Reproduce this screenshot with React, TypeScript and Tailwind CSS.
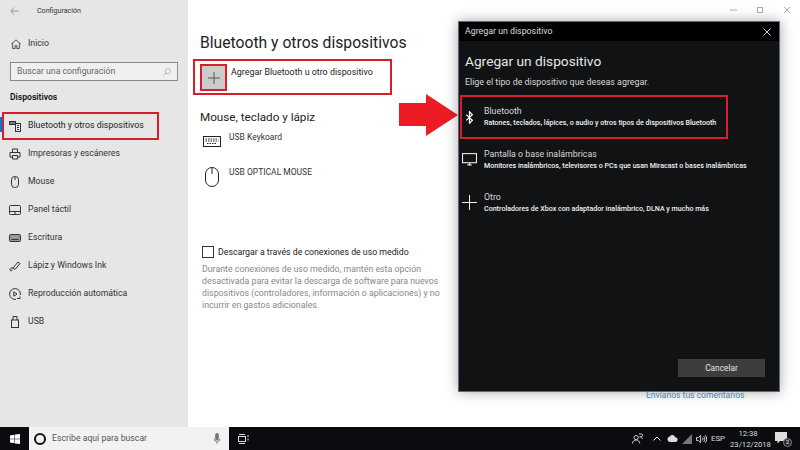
import type { ReactNode } from 'react';

const NAV_ICON = 'h-[12px] w-[12px] fill-none stroke-[#333] stroke-1';

const navItems: { label: string; icon: ReactNode }[] = [
    {
        label: 'Impresoras y escáneres',
        icon: <svg viewBox="0 0 12 12" className={NAV_ICON}><path d="M3.5 4V1h5v3M1 9V4.5h10V9H9M3 9H1M3.5 7.5h5V11h-5z" /></svg>,
    },
    {
        label: 'Mouse',
        icon: <svg viewBox="0 0 12 12" className={NAV_ICON}><rect x="2.5" y="0.5" width="7" height="11" rx="3.2" /><path d="M6 1v3" /></svg>,
    },
    {
        label: 'Panel táctil',
        icon: <svg viewBox="0 0 12 12" className={NAV_ICON}><rect x="0.5" y="1.5" width="11" height="9" rx="1" /><path d="M0.5 7.5h11M6 7.5v3" /></svg>,
    },
    {
        label: 'Escritura',
        icon: <svg viewBox="0 0 12 12" className={NAV_ICON}><rect x="0.5" y="2.5" width="11" height="7" rx="1" fill="#999" /><path d="M2.5 7.5h7" /></svg>,
    },
    {
        label: 'Lápiz y Windows Ink',
        icon: <svg viewBox="0 0 12 12" className={NAV_ICON}><path d="M4 8l5-6 2 1.5-5 6zM4 8c-2-.5-3.5.5-3 2s2.5 1 2-.5" /></svg>,
    },
    {
        label: 'Reproducción automática',
        icon: <svg viewBox="0 0 12 12" className={NAV_ICON}><path d="M7 11.3A5.4 5.4 0 1 1 11.3 7" /><path d="M4.8 3.8l3.2 2.2-3.2 2.2z" /><path d="M8 10.5h3v-2" /></svg>,
    },
    {
        label: 'USB',
        icon: <svg viewBox="0 0 12 12" className={NAV_ICON}><rect x="2.5" y="4" width="7" height="7.5" /><path d="M4 4V0.5h4V4" /></svg>,
    },
];

function NavRow({ icon, label }: { icon: ReactNode; label: string }) {
    return (
        <div className="flex h-[28px] items-center gap-[7px] pl-[9px] text-[8.7px] text-[#333]">
            {icon}
            <span>{label}</span>
        </div>
    );
}

function DialogOption({ icon, title, text }: { icon: ReactNode; title: string; text: string }) {
    return (
        <div className="flex h-[43px] items-center">
            <div className="flex w-[25px] shrink-0 justify-start pl-[3px]">{icon}</div>
            <div>
                <div className="text-[8.8px] leading-[11px] text-[#d8d8d8]">{title}</div>
                <div className="text-[7.1px] leading-[11px] font-medium whitespace-nowrap text-[#f2f2f2]">{text}</div>
            </div>
        </div>
    );
}

function Dialog() {
    return (
        <div className="absolute top-[21px] left-[458px] flex h-[371px] w-[322px] flex-col border border-[#5b6b7d] bg-[#111214] shadow-[0_0_12px_rgba(0,0,0,0.35)]">
            <div className="flex h-[19px] shrink-0 items-center justify-between bg-black pr-[8px] pl-[6px] text-[8.8px] text-[#ddd]">
                <span>Agregar un dispositivo</span>
                <svg viewBox="0 0 8 8" className="h-[8px] w-[8px] fill-none stroke-[#ccc] stroke-1"><path d="M0.5 0.5l7 7M7.5 0.5l-7 7" /></svg>
            </div>
            <div className="flex flex-1 flex-col px-[6px]">
                <h2 className="mt-[10px] text-[13.7px] leading-[20px] text-[#e8e8e8]">Agregar un dispositivo</h2>
                <p className="mt-[4px] text-[8.9px] leading-[14px] text-[#d8d8d8]">Elige el tipo de dispositivo que deseas agregar.</p>
                <div className="mt-[6px] -ml-[5px] flex h-[44px] w-[268px] items-center border-[2.5px] border-[#d81e2c]">
                    <div className="flex w-[22px] shrink-0 justify-start pl-[3px]">
                        <svg viewBox="0 0 10 16" className="h-[13px] w-[9px] fill-none stroke-white stroke-[1.5]"><path d="M1 4.5l7.5 7-3.5 3.5V1l3.5 3.5L1 11.5" /></svg>
                    </div>
                    <div>
                        <div className="text-[8.8px] leading-[11px] text-[#d8d8d8]">Bluetooth</div>
                        <div className="text-[7.1px] leading-[11px] font-medium whitespace-nowrap text-[#f2f2f2]">Ratones, teclados, lápices, o audio y otros tipos de dispositivos Bluetooth</div>
                    </div>
                </div>
                <div className="-mt-[1px] -ml-[6px] flex flex-col">
                    <DialogOption
                        icon={<svg viewBox="0 0 14 12" className="h-[13px] w-[15px] fill-none stroke-[#eee] stroke-1"><rect x="0.5" y="0.5" width="13" height="8.5" /><path d="M5 11h4M7 9v2" /></svg>}
                        title="Pantalla o base inalámbricas"
                        text="Monitores inalámbricos, televisores o PCs que usan Miracast o bases inalámbricas"
                    />
                    <DialogOption
                        icon={<svg viewBox="0 0 15 15" className="h-[15px] w-[15px] fill-none stroke-[#eee] stroke-1"><path d="M0 7.5h15M7.5 0v15" /></svg>}
                        title="Otro"
                        text="Controladores de Xbox con adaptador inalámbrico, DLNA y mucho más"
                    />
                </div>
                <div className="mt-auto mb-[14px] flex justify-end pr-[8px]">
                    <div className="flex h-[18px] w-[87px] items-center justify-center bg-[#3d3d3d] text-[8.3px] text-[#e4e4e4]">Cancelar</div>
                </div>
            </div>
        </div>
    );
}

function Taskbar() {
    return (
        <div className="flex h-[23px] items-center bg-[#0a0c10] text-[#ddd]">
            <div className="flex w-[29px] justify-center">
                <svg viewBox="0 0 10 10" className="h-[10px] w-[10px] fill-white"><path d="M0 1.4L4.5 0.7V4.8H0zM5 0.6L10 0V4.8H5zM0 5.2H4.5V9.3L0 8.6zM5 5.2H10V10L5 9.4z" /></svg>
            </div>
            <div className="flex h-full w-[200px] items-center bg-[#f2f2f2] pl-[5px] text-[8.7px] text-[#555]">
                <div className="h-[12px] w-[12px] rounded-full border-2 border-[#111]" />
                <span className="ml-[6px] flex-1">Escribe aquí para buscar</span>
                <svg viewBox="0 0 8 12" className="mr-[8px] h-[11px] w-[8px] fill-[#777]"><rect x="2" y="0" width="4" height="8" rx="2" /><path d="M0.5 6a3.5 3.5 0 0 0 7 0h-0.8a2.7 2.7 0 0 1-5.4 0zM3.5 9.5h1V12h-1z" /></svg>
            </div>
            <div className="ml-[9px] flex">
                <svg viewBox="0 0 11 10" className="h-[10px] w-[11px] fill-none stroke-[#ddd]"><rect x="0.5" y="2.5" width="7" height="5" /><path d="M1 0.5h6M1 9.5h6M10 1v2M10 4.5v2" /></svg>
            </div>
            <div className="ml-auto flex items-center">
                <svg viewBox="0 0 12 12" className="h-[11px] w-[11px] fill-none stroke-[#ddd]"><circle cx="4.5" cy="5" r="2.3" /><path d="M0.5 11.5c0-2.5 2-3.8 4-3.8s4 1.3 4 3.8M7.5 1h2.5a1.3 1.3 0 0 1 0 3.2H8M9.5 4.2l2 2.3" /></svg>
                <svg viewBox="0 0 8 5" className="ml-[10px] h-[5px] w-[8px] fill-none stroke-[#ddd]"><path d="M0.5 4.5l3.5-3.5 3.5 3.5" /></svg>
                <svg viewBox="0 0 12 8" className="ml-[6px] h-[7px] w-[11px] fill-[#ddd]"><path d="M3 8a3 3 0 0 1-.5-5.9A3.5 3.5 0 0 1 9 2.6 2.7 2.7 0 0 1 9.3 8z" /></svg>
                <svg viewBox="0 0 10 10" className="ml-[4px] h-[10px] w-[10px] fill-[#777]"><path d="M0 10L10 0v10z" /></svg>
                <svg viewBox="0 0 12 10" className="ml-[4px] h-[10px] w-[11px] fill-none stroke-[#ddd]"><path d="M0.5 3.5h2l2.5-2.5v8l-2.5-2.5h-2zM7 3.5a2 2 0 0 1 0 3M8.5 2a4.5 4.5 0 0 1 0 6M10 0.8a6 6 0 0 1 0 8.4" /></svg>
                <span className="ml-[4px] text-[7.8px]">ESP</span>
                <div className="ml-[5px] w-[36px] text-center text-[7.7px] leading-[11px]">
                    <div>12:38</div>
                    <div>23/12/2018</div>
                </div>
                <div className="relative mr-[11px] ml-[9px] h-[14px] w-[14px]">
                    <svg viewBox="0 0 12 12" className="h-[12px] w-[12px] fill-[#ddd]"><path d="M0 0h12v9H5L2.5 11.5V9H0z" /></svg>
                    <span className="absolute right-[-3px] bottom-[-1px] flex h-[9px] w-[9px] items-center justify-center rounded-full border border-[#888] bg-[#222] text-[6px] leading-none text-white">2</span>
                </div>
            </div>
        </div>
    );
}

export default function App() {
    return (
        <div className="relative flex h-[450px] w-[800px] flex-col overflow-hidden bg-white font-['Roboto','Open_Sans',sans-serif]">
            <div className="flex min-h-0 flex-1">
                <aside className="w-[188px] shrink-0 bg-[#e6e6e6]">
                    <div className="flex h-[22px] items-center pl-[10px] text-[7.1px] text-[#333]">
                        <svg viewBox="0 0 9 8" className="h-[8px] w-[9px] fill-none stroke-[#999]"><path d="M9 4H1M4 0.5L0.8 4 4 7.5" /></svg>
                        <span className="ml-[18px]">Configuración</span>
                    </div>
                    <div className="mt-[8px] flex h-[28px] items-center gap-[7px] pl-[11px] text-[8.7px] text-[#333]">
                        <svg viewBox="0 0 12 12" className="h-[10px] w-[10px] fill-none stroke-[#333]"><path d="M0.5 6L6 1l5.5 5M2 5v6.5h3V8h2v3.500h3V5" /></svg>
                        <span>Inicio</span>
                    </div>
                    <div className="mx-[10px] mt-[4px] flex h-[19px] items-center justify-between border border-[#8a8a8a] bg-[#f0f0f0] px-[6px] text-[8.7px] text-[#666]">
                        <span>Buscar una configuración</span>
                        <svg viewBox="0 0 10 10" className="h-[8px] w-[8px] fill-none stroke-[#aaa]"><circle cx="6" cy="4" r="3.3" /><path d="M3.7 6.3L0.5 9.5" /></svg>
                    </div>
                    <div className="mt-[9px] pl-[10px] text-[8.6px] leading-[14px] font-semibold text-[#111]">Dispositivos</div>
                    <div className="relative mt-[8px] flex h-[28px] items-center gap-[7px] pl-[9px] text-[8.8px] text-[#222]">
                        <svg viewBox="0 0 12 12" className="h-[12px] w-[12px] fill-none stroke-[#333]"><rect x="0.5" y="1.5" width="6" height="3" fill="#777" /><rect x="6.5" y="3.5" width="5" height="8" /><path d="M8 5.5h2M8 7.5h2M8 9.5h2" /></svg>
                        <span>Bluetooth y otros dispositivos</span>
                        <span className="absolute top-[5px] left-0 h-[15px] w-[2px] bg-[#0078d7]" />
                        <span className="absolute top-0 left-[2px] h-[28px] w-[157px] border-[2.5px] border-[#d81e2c]" />
                    </div>
                    {navItems.map((item) => (
                        <NavRow key={item.label} icon={item.icon} label={item.label} />
                    ))}
                </aside>
                <main className="flex-1 pl-[12px]">
                    <h1 className="mt-[32px] text-[15.7px] leading-[22px] text-[#222]">Bluetooth y otros dispositivos</h1>
                    <div className="mt-[5px] -ml-[7px] flex h-[36px] w-[199px] items-start border-[2.5px] border-[#d81e2c] pt-[3px] pl-[5px]">
                        <div className="flex h-[27px] w-[27px] items-center justify-center border-[2.5px] border-[#d81e2c] bg-[#cccccc]">
                            <svg viewBox="0 0 12 12" className="h-[12px] w-[12px] fill-none stroke-[#555]"><path d="M0 6h12M6 0v12" /></svg>
                        </div>
                        <span className="mt-[1px] ml-[4px] text-[8.9px] leading-[14px] text-[#222]">Agregar Bluetooth u otro dispositivo</span>
                    </div>
                    <h3 className="mt-[13px] text-[11.7px] leading-[18px] text-[#222]">Mouse, teclado y lápiz</h3>
                    <div className="mt-[4px] flex h-[35px] items-start">
                        <div className="flex w-[29px] justify-start pl-[3px] pt-[6px]">
                            <svg viewBox="0 0 18 11" className="h-[11px] w-[18px] fill-none stroke-[#222]"><rect x="0.5" y="0.5" width="17" height="10" /><path d="M2.5 3h13M2.5 5h13M4 7.5h10" strokeDasharray="1.5 1" /></svg>
                        </div>
                        <span className="text-[8.5px] leading-[14px] text-[#333]">USB Keykoard</span>
                    </div>
                    <div className="flex h-[35px] items-start">
                        <div className="flex w-[29px] justify-start pl-[5px] pt-[2px]">
                            <svg viewBox="0 0 14 20" className="h-[20px] w-[14px] fill-none stroke-[#222]"><rect x="0.5" y="0.5" width="13" height="19" rx="6.5" /><path d="M7 1v6" /></svg>
                        </div>
                        <span className="text-[8.5px] leading-[14px] text-[#333]">USB OPTICAL MOUSE</span>
                    </div>
                    <div className="mt-[45px] ml-[2px] flex items-center">
                        <div className="h-[12px] w-[12px] border border-[#333]" />
                        <span className="ml-[4px] text-[8.75px] leading-[14px] text-[#222]">Descargar a través de conexiones de uso medido</span>
                    </div>
                    <p className="mt-[4px] ml-[2px] w-[240px] text-[8.8px] leading-[12px] text-[#888]">
                        Durante conexiones de uso medido, mantén esta opción desactivada para evitar la descarga de software para nuevos dispositivos (controladores, información o aplicaciones) y no incurrir en gastos adicionales.
                    </p>
                </main>
            </div>
            <Taskbar />
            <svg viewBox="0 0 60 42" className="absolute top-[94px] left-[399px] h-[42px] w-[60px] fill-[#ed1c24]"><path d="M0 9h27V0l32 21-32 21V32H0z" /></svg>
            <Dialog />
            <span className="absolute top-[389px] left-[646px] text-[8.55px] leading-[13px] text-[#3a86c8]">Envíanos tus comentarios</span>
            <svg viewBox="0 0 62 8" className="absolute top-[6px] left-[730px] h-[8px] w-[62px] fill-none stroke-[#aaa]"><path d="M0 4h7" /><rect x="27.5" y="1.5" width="5" height="5" /><path d="M54 1l6 6M60 1l-6 6" /></svg>
        </div>
    );
}
